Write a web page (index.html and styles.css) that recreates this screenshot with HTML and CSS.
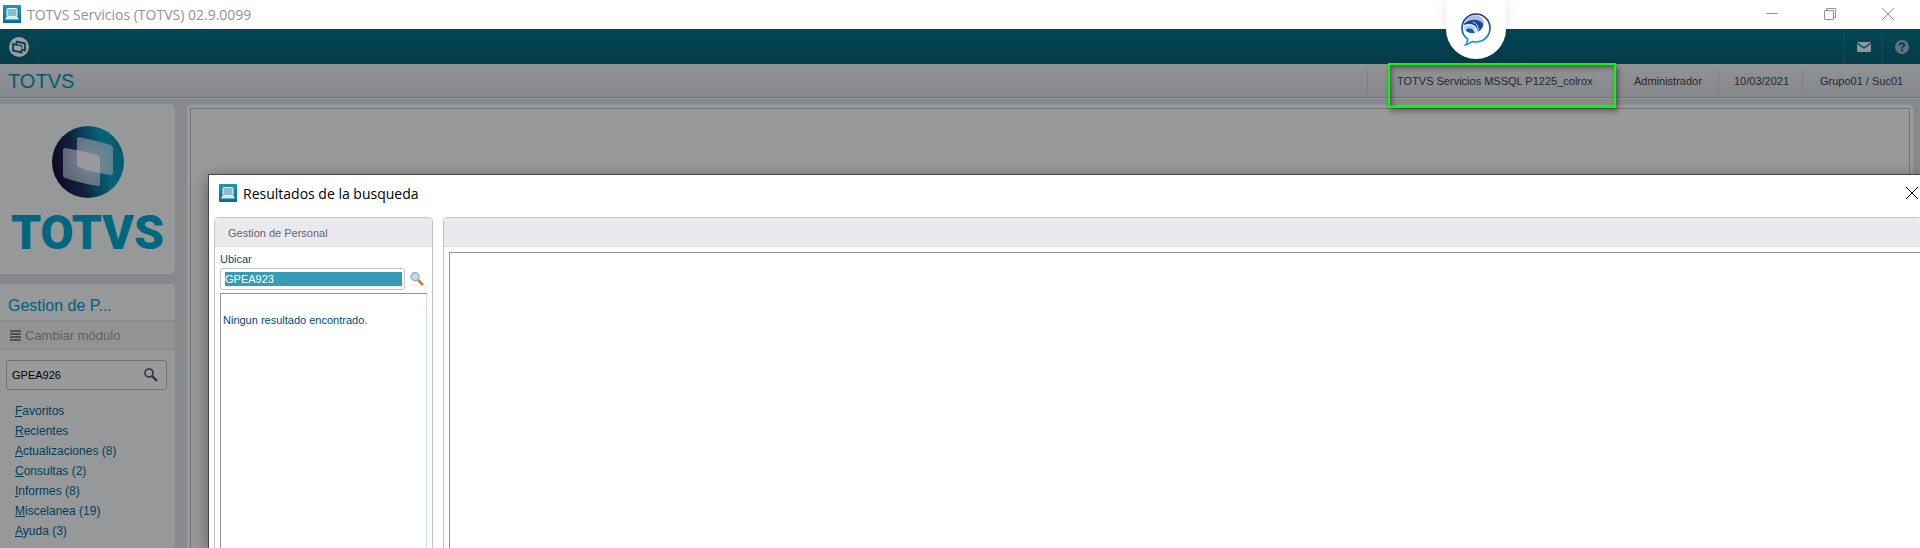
FILE: index.html
```html
<!DOCTYPE html>
<html lang="es">
<head>
  <meta charset="UTF-8">
  <meta name="viewport" content="width=device-width, initial-scale=1.0">
  <title>TOTVS Servicios (TOTVS) 02.9.0099</title>
  <link rel="stylesheet" href="styles.css">
</head>
<body>
  <svg width="0" height="0" class="defs">
    <defs>
      <linearGradient id="app-bg" x1="0" y1="0" x2="0" y2="1">
        <stop offset="0" stop-color="#2295b8"/>
        <stop offset="1" stop-color="#066d92"/>
      </linearGradient>
      <symbol id="app-icon" viewBox="0 0 18 18">
        <rect width="18" height="18" fill="url(#app-bg)"/>
        <rect x="4" y="3.500" width="10" height="8" rx="1" fill="#86bfd0" stroke="#eef7fa"/>
        <path d="M3.500 11.500h11l1.500 3H2z" fill="#d5eaf1"/>
      </symbol>
    </defs>
  </svg>

  <header class="titlebar">
    <svg class="app-icon"><use href="#app-icon"/></svg>
    <span class="window-title">TOTVS Servicios (TOTVS) 02.9.0099</span>
    <div class="window-buttons">
      <button type="button" aria-label="Minimizar">
        <svg width="12" height="12" viewBox="0 0 12 12"><path d="M0 5.500h12"/></svg>
      </button>
      <button type="button" aria-label="Restaurar">
        <svg width="12" height="12" viewBox="0 0 12 12"><path d="M.5 2.500h9v9h-9zM2.500 2.500V.5h9v9h-2"/></svg>
      </button>
      <button type="button" aria-label="Cerrar">
        <svg width="12" height="12" viewBox="0 0 12 12"><path d="M0 0l12 12M12 0L0 12"/></svg>
      </button>
    </div>
  </header>

  <nav class="navbar">
    <a href="#" class="nav-item nav-home" aria-label="Inicio">
      <svg width="20" height="20" viewBox="0 0 20 20">
        <circle cx="10" cy="10" r="10" fill="#9a9fa2"/>
        <path d="M7.500 4.500l8.500 2v7l-2.800-.6" fill="none" stroke="#05414f" stroke-width="1.800"/>
        <path d="M7.500 4v4M4 7l8.500 2.200v6.300L4 13.500z" fill="none" stroke="#05414f" stroke-width="1.800"/>
        <path d="M8 8.500l4.500 1v3.200L8 11.500z" fill="#9a9fa2"/>
      </svg>
    </a>
    <a href="#" class="nav-item nav-mail" aria-label="Mensajes">
      <svg width="14" height="10" viewBox="0 0 14 10">
        <rect width="14" height="10" rx="1" fill="#8d969a"/>
        <path d="M0 1l7 5 7-5" fill="none" stroke="#05414f" stroke-width="1.300"/>
      </svg>
    </a>
    <a href="#" class="nav-item nav-help" aria-label="Ayuda">
      <svg width="14" height="14" viewBox="0 0 14 14">
        <circle cx="7" cy="7" r="7" fill="#5c747c"/>
        <path d="M4.800 5.400c0-3 4.500-2.800 4.500-.3 0 1.500-2.200 1.600-2.200 3.300M7.100 9.600v1.800" fill="none" stroke="#05384a" stroke-width="1.800"/>
      </svg>
    </a>
  </nav>

  <div class="infobar">
    <h1>TOTVS</h1>
    <ul class="session">
      <li class="environment">TOTVS Servicios MSSQL P1225_colrox</li>
      <li class="user">Administrador</li>
      <li class="date">10/03/2021</li>
      <li class="branch">Grupo01 / Suc01</li>
    </ul>
  </div>

  <div class="layout">
    <aside class="sidebar">
      <div class="card brand">
        <svg class="brand-globe" width="72" height="72" viewBox="0 0 72 72">
          <defs>
            <linearGradient id="globe" x1="0" y1=".65" x2="1" y2=".4">
              <stop offset="0" stop-color="#0f0822"/>
              <stop offset=".35" stop-color="#10203f"/>
              <stop offset=".75" stop-color="#06637a"/>
              <stop offset="1" stop-color="#02586d"/>
            </linearGradient>
            <radialGradient id="glow" gradientUnits="userSpaceOnUse" cx="36" cy="36" r="26">
              <stop offset="0" stop-color="#a0a0a3"/>
              <stop offset=".4" stop-color="#94979f" stop-opacity=".75"/>
              <stop offset="1" stop-color="#8b8f9b" stop-opacity=".65"/>
            </radialGradient>
          </defs>
          <circle cx="36" cy="36" r="36" fill="url(#globe)"/>
          <path d="M27 11q15 3 32 8q2 1 2 3v25q0 2-2 2q-17-2-32-8q-2-1-2-3V13q0-2 2-2z" fill="url(#glow)"/>
          <path d="M13 22q16 2 32 7q3 1 3 4v25q0 2-2 2q-18-3-33-8q-2-1-2-3V24q0-2 2-2z" fill="url(#glow)"/>
          <path d="M25 25q11 2 20 4q3 1 3 4v13q-12-1-21-5q-2-1-2-3z" fill="#9a9a9c"/>
        </svg>
        <span class="brand-name">TOTVS</span>
      </div>

      <div class="card module">
        <h2>Gestion de P...</h2>
        <button type="button" class="change-module">
          <svg width="11" height="11" viewBox="0 0 11 11"><path d="M0 1h11M0 4h11M0 7h11M0 10h11" stroke="#505153" stroke-width="2"/></svg>
          Cambiar módulo
        </button>
        <form class="search">
          <input type="text" value="GPEA926" aria-label="Buscar">
          <button type="button" aria-label="Buscar rutina">
            <svg width="14" height="14" viewBox="0 0 14 14"><circle cx="5" cy="5" r="4" fill="none" stroke="#2b343e" stroke-width="1.600"/><path d="M8 8l5 5" stroke="#2b343e" stroke-width="2.400"/></svg>
          </button>
        </form>
        <ul class="menu">
          <li><a href="#"><u>F</u>avoritos</a></li>
          <li><a href="#"><u>R</u>ecientes</a></li>
          <li><a href="#"><u>A</u>ctualizaciones (8)</a></li>
          <li><a href="#"><u>C</u>onsultas (2)</a></li>
          <li><a href="#"><u>I</u>nformes (8)</a></li>
          <li><a href="#"><u>M</u>iscelanea (19)</a></li>
          <li><a href="#"><u>A</u>yuda (3)</a></li>
        </ul>
      </div>
    </aside>
    <main class="workspace"><div class="workspace-inner"></div></main>
  </div>

  <div class="dialog" role="dialog" aria-labelledby="dialog-title">
    <div class="dialog-header">
      <svg class="app-icon"><use href="#app-icon"/></svg>
      <h2 id="dialog-title">Resultados de la busqueda</h2>
      <button type="button" aria-label="Cerrar resultados">
        <svg width="12" height="12" viewBox="0 0 12 12"><path d="M0 0l12 12M12 0L0 12"/></svg>
      </button>
    </div>
    <div class="dialog-body">
      <section class="panel results">
        <h3>Gestion de Personal</h3>
        <form class="locate">
          <label for="ubicar">Ubicar</label>
          <div class="locate-row">
            <div class="locate-field"><input type="text" id="ubicar" value="GPEA923"></div>
            <button type="button" aria-label="Ubicar">
              <svg width="14" height="14" viewBox="0 0 14 14">
                <path d="M1 13.500h8" stroke="#e4e4e4"/>
                <circle cx="5" cy="4.800" r="4" fill="#b9e2f0" stroke="#a3adb4" stroke-width="1.400"/>
                <path d="M8 8l5 5" stroke="#d9782a" stroke-width="2.600"/>
              </svg>
            </button>
          </div>
        </form>
        <div class="result-list">Ningun resultado encontrado.</div>
      </section>
      <section class="panel detail">
        <h3></h3>
        <div class="detail-box"></div>
      </section>
    </div>
  </div>

  <!-- floating chat tab and highlight -->
  <div class="chat-tab">
    <svg width="30" height="34" viewBox="0 0 30 34">
      <defs>
        <linearGradient id="chat" x1="0" y1="0" x2="0" y2="1">
          <stop offset="0" stop-color="#27308f"/>
          <stop offset=".5" stop-color="#1765b5"/>
          <stop offset="1" stop-color="#0aa5e0"/>
        </linearGradient>
      </defs>
      <path d="M6.500 26C3 23.500 1 19.500 1 15a14 14 0 1 1 14 14c-1.500 0-3-.2-4-.5C9 30.500 7 31.500 4.500 32c1.500-1.500 2.500-3.500 2-6z" fill="#fff" stroke="url(#chat)" stroke-width="1.700"/>
      <path d="M3.500 9C7 2 16 0 21 5c2 2 2.500 4 1.500 6C18 5 10 4.500 3.500 9z" fill="#aebde2"/>
      <path d="M3 10.500C9 5 18 5 22.500 11c-.5 3.500-2.500 6.500-6 8.500C17 13 11 9 3 12z" fill="#164aa3"/>
      <path d="M3 13.500c6-3 12-.5 12.500 6-3-4-8-6-12.500-3z" fill="#b7cce9"/>
      <path d="M4.500 16.500c4-2.500 8-1 9.500 3.500-4 .5-8 0-9.500-3.500z" fill="#0b62b4"/>
      <path d="M12 9c4 1.500 6 5.500 5 10.500" fill="none" stroke="#e3ecf8"/>
    </svg>
  </div>
  <div class="highlight"></div>
</body>
</html>
```
FILE: styles.css
```css
* {
  box-sizing: border-box;
}
body {
  margin: 0;
  height: 100vh;
  display: flex;
  flex-direction: column;
  overflow: hidden;
  background: #868a8d;
  font-family: "Liberation Sans", Arial, sans-serif;
  font-size: 11px;
  color: #26282a;
}
h1, h2, h3, ul {
  margin: 0;
  padding: 0;
  font-weight: normal;
  list-style: none;
}
button {
  padding: 0;
  border: none;
  background: none;
  font-family: inherit;
  cursor: pointer;
}
svg {
  display: block;
}
input {
  font-family: inherit;
  border: none;
  outline: none;
}
.defs {
  position: absolute;
}
.app-icon {
  width: 18px;
  height: 18px;
}

/* window title */
.titlebar {
  flex: none;
  height: 29px;
  display: flex;
  align-items: center;
  gap: 6px;
  padding: 0 26px 1px 3px;
  background: #fff;
}
.window-title {
  font-family: "Open Sans", "Noto Sans", sans-serif;
  font-size: 14px;
  color: #929292;
}
.window-buttons {
  display: flex;
  gap: 46px;
  margin-left: auto;
}
.window-buttons path {
  fill: none;
  stroke: #929292;
}

/* top bars */
.navbar {
  flex: none;
  height: 35px;
  display: flex;
  background: linear-gradient(#034755, #063b48);
}
.nav-item {
  width: 38px;
  display: flex;
  align-items: center;
  justify-content: center;
  border-left: 1px solid #0b4d5c;
}
.nav-home {
  border-left: none;
  border-right: 1px solid #0c4653;
}
.nav-mail {
  margin-left: auto;
}
.infobar {
  flex: none;
  height: 34px;
  display: flex;
  align-items: center;
  justify-content: space-between;
  padding: 2px 0 0 8px;
  background: linear-gradient(#919396, #85888b);
  border-bottom: 1px solid #707478;
}
.infobar h1 {
  font-size: 20px;
  color: #005c74;
}
.session {
  display: flex;
  line-height: 23px;
}
.session li {
  padding-left: 15px;
  border-left: 1px solid #7d8083;
}
.session .environment {
  width: 251px;
  padding-left: 29px;
}
.session .user {
  width: 100px;
}
.session .date {
  width: 84px;
}
.session .branch {
  width: 118px;
  padding-left: 17px;
}

/* main layout */
.layout {
  flex: 1;
  min-height: 0;
  display: flex;
  gap: 11px;
  padding: 5px 6px 0 0;
  border-top: 1px solid #95999c;
}
.sidebar {
  flex: none;
  width: 175px;
  display: flex;
  flex-direction: column;
  gap: 10px;
}
.card {
  background: #97989a;
  border-radius: 0 5px 5px 0;
}
.brand {
  height: 170px;
  display: flex;
  flex-direction: column;
  align-items: center;
  padding-top: 22px;
}
.brand-name {
  margin-top: 10px;
  font-family: Roboto, "Liberation Sans", sans-serif;
  font-size: 48px;
  font-weight: 900;
  line-height: 50px;
  color: #00677f;
}
.module {
  flex: 1;
}
.module h2 {
  padding: 12px 8px 4px;
  font-size: 16px;
  line-height: 20px;
  color: #005e78;
}
.change-module {
  width: 100%;
  height: 30px;
  display: flex;
  align-items: center;
  gap: 4px;
  padding-left: 10px;
  background: #919492;
  border-top: 1px dotted #7e8080;
  border-bottom: 1px dotted #7e8080;
  font-size: 13px;
  color: #5f6163;
}
.search {
  height: 30px;
  display: flex;
  align-items: center;
  margin: 10px 8px 11px 6px;
  padding: 0 8px 0 5px;
  background: #9a9a9a;
  border: 1px solid #727375;
  border-radius: 3px;
}
.search input {
  flex: 1;
  min-width: 0;
  padding: 0;
  background: transparent;
  font-size: 11px;
  color: #000;
}
.menu {
  padding-left: 15px;
  font-size: 12px;
  line-height: 20px;
}
.menu a {
  color: #00405a;
  text-decoration: none;
}
.workspace {
  flex: 1;
  padding: 3px 3px 0;
  background: #9a9a9a;
  border: 1px solid #8d8e8f;
  border-bottom: none;
  border-radius: 5px 5px 0 0;
}
.workspace-inner {
  height: 100%;
  border: 1px solid #747474;
  border-bottom: none;
}

/* search results window */
.dialog {
  position: absolute;
  top: 174px;
  right: 0;
  bottom: 0;
  left: 208px;
  display: flex;
  flex-direction: column;
  background: #fff;
  border: 1px solid #454545;
  border-width: 1px 0 0 1px;
  box-shadow: 0 4px 16px rgba(0, 0, 0, 0.4);
}
.dialog-header {
  height: 42px;
  display: flex;
  align-items: center;
  gap: 6px;
  padding: 0 2px 6px 10px;
}
.dialog-header h2 {
  font-family: "Open Sans", "Noto Sans", sans-serif;
  font-size: 14px;
  color: #000;
}
.dialog-header button {
  margin-left: auto;
}
.dialog-header button path {
  stroke: #000;
}
.dialog-body {
  flex: 1;
  min-height: 0;
  display: flex;
  gap: 10px;
  padding-left: 5px;
}
.panel {
  display: flex;
  flex-direction: column;
  border: 1px solid #c4c4c4;
  border-bottom: none;
  border-radius: 5px 5px 0 0;
}
.panel h3 {
  height: 29px;
  padding-left: 13px;
  background: #eae9ee;
  border-bottom: 1px solid #e0e0e0;
  border-radius: 4px 4px 0 0;
  font-size: 11px;
  line-height: 31px;
  color: #666;
}
.results {
  width: 219px;
}
.detail {
  flex: 1;
  border-right: none;
  border-top-right-radius: 0;
}
.detail-box {
  flex: 1;
  margin: 5px 0 0 5px;
  border: 1px solid #929292;
  border-width: 1px 0 0 1px;
}
.locate {
  padding: 4px 3px 3px 5px;
  color: #004a7f;
}
.locate label {
  display: block;
  padding-bottom: 1px;
  line-height: 16px;
}
.locate-row {
  display: flex;
  align-items: center;
  gap: 5px;
}
.locate-field {
  width: 185px;
  height: 22px;
  padding: 3px 2px 3px 4px;
  border: 1px solid #c4c4c4;
  border-radius: 3px;
}
.locate-field input {
  display: block;
  width: 100%;
  height: 14px;
  padding: 0;
  background: #379bb5;
  font-size: 11px;
  color: #fff;
}
.result-list {
  flex: 1;
  margin: 0 5px;
  padding: 18px 2px 0;
  border: 1px solid #929292;
  border-right-color: #cfdfec;
  border-bottom: none;
  line-height: 16px;
  color: #004a7f;
}

/* elements over the page */
.chat-tab {
  position: absolute;
  top: 0;
  right: 414px;
  width: 60px;
  height: 59px;
  padding: 13px 15px;
  background: #fff;
  border-radius: 0 0 30px 30px;
  box-shadow: 0 0 12px rgba(0, 0, 0, 0.1);
}
.highlight {
  position: absolute;
  top: 63px;
  right: 304px;
  width: 228px;
  height: 45px;
  border: 2px solid #0f0;
  box-shadow: 2px 3px 5px rgba(0, 0, 0, 0.4), inset 2px 3px 5px rgba(0, 0, 0, 0.4);
}
```
